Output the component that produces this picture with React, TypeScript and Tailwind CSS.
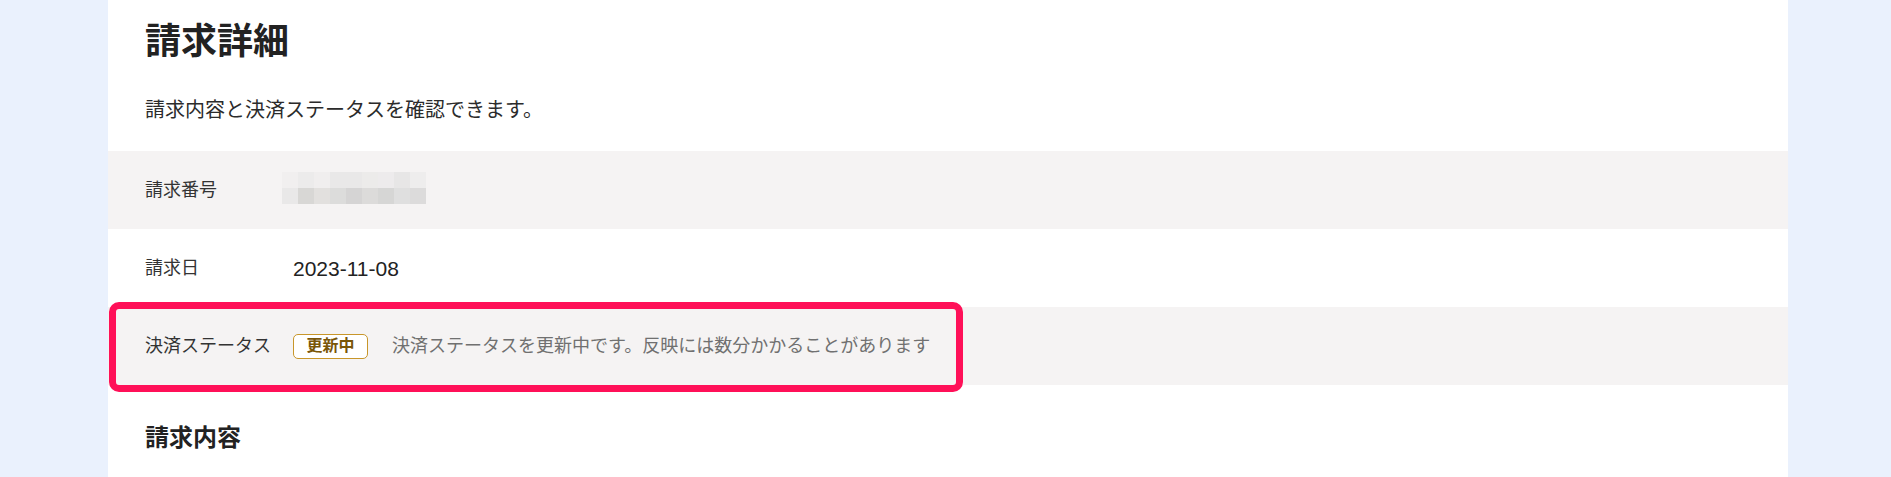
import React from "react";

const FONT = "font-['Liberation_Sans','Noto_Sans_CJK_JP',sans-serif]";

const mosaicTop = ["#f1efef", "#ecebeb", "#f0eeee", "#e9e8e8", "#e9e8e8", "#ecebea", "#edebec", "#e7e6e6", "#eeeded"];
const mosaicBottom = ["#e9e8e8", "#d8d7d5", "#e2e0de", "#dcdcdb", "#d5d4d4", "#dcdbda", "#d6d6d5", "#dfdfdf", "#dcdbdb"];

function Mosaic() {
  return (
    <div className="-ml-[11px] -mt-[4px] flex flex-col">
      <div className="flex">
        {mosaicTop.map((c, i) => (
          <div key={i} className="h-[16px] w-[16px]" style={{ backgroundColor: c }} />
        ))}
      </div>
      <div className="flex">
        {mosaicBottom.map((c, i) => (
          <div key={i} className="h-[16px] w-[16px]" style={{ backgroundColor: c }} />
        ))}
      </div>
    </div>
  );
}

export default function App() {
  return (
    <div className={`${FONT} flex h-[477px] w-full overflow-hidden bg-[#eaf1fd]`}>
      <div className="w-[108px] shrink-0" />
      <main className="w-[1680px] shrink-0 bg-white">
        <div className="pl-[37px] pt-[24px]">
          <h1 className="text-[36px] font-bold leading-[36px] text-[#222222]">請求詳細</h1>
          <p className="mt-[40px] text-[20px] leading-[20px] text-[#2b2b2b]">
            請求内容と決済ステータスを確認できます。
          </p>
        </div>
        <div className="mt-[31px]">
          <div className="flex h-[78px] items-center bg-[#f5f3f3] pl-[37px]">
            <div className="w-[148px] text-[18px] leading-[18px] text-[#333333]">請求番号</div>
            <Mosaic />
          </div>
          <div className="flex h-[78px] items-center bg-white pl-[37px]">
            <div className="w-[148px] text-[18px] leading-[18px] text-[#333333]">請求日</div>
            <div className="text-[21px] leading-[21px] text-[#222222]">2023-11-08</div>
          </div>
          <div className="relative flex h-[78px] items-center bg-[#f5f3f3] pl-[37px]">
            <div className="w-[148px] text-[18px] leading-[18px] text-[#333333]">決済ステータス</div>
            <span className="flex h-[25px] w-[75px] items-center justify-center rounded-[5px] border border-[#c8962a] bg-white text-[16px] font-bold leading-[16px] text-[#7a5608]">
              更新中
            </span>
            <span className="ml-[24px] text-[18px] leading-[18px] text-[#707070]">
              決済ステータスを更新中です。反映には数分かかることがあります
            </span>
            <div className="pointer-events-none absolute left-[1px] top-[-5px] h-[90px] w-[854px] rounded-[10px] border-[7px] border-[#ff1058]" />
          </div>
        </div>
        <h2 className="mt-[41px] pl-[37px] text-[24px] font-bold leading-[24px] text-[#222222]">請求内容</h2>
      </main>
    </div>
  );
}
